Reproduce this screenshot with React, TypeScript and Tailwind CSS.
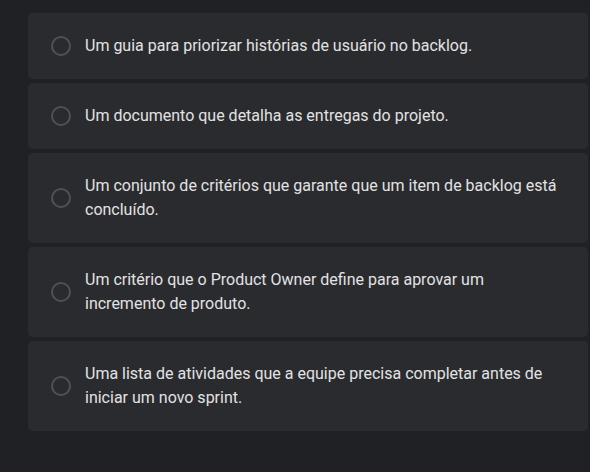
import React from 'react';

const options = [
  'Um guia para priorizar histórias de usuário no backlog.',
  'Um documento que detalha as entregas do projeto.',
  'Um conjunto de critérios que garante que um item de backlog está concluído.',
  'Um critério que o Product Owner define para aprovar um incremento de produto.',
  'Uma lista de atividades que a equipe precisa completar antes de iniciar um novo sprint.',
];

const App: React.FC = () => {
  return (
    <div className="min-h-[472px] w-[590px] bg-[#1f2125] pt-[13px] pl-[28px] pr-[2px] font-['Roboto',sans-serif]">
      <div className="flex flex-col gap-[4px]">
        {options.map(option => (
          <label
            key={option}
            className="flex items-center gap-[14px] rounded-[5px] bg-[#2a2b2f] py-[21px] pl-[23px] pr-[24px] cursor-pointer"
          >
            <span className="h-[20px] w-[20px] shrink-0 rounded-full border-2 border-[#505156]" />
            <span className="text-[16px] font-normal leading-[24px] text-[#e2e2e3]">{option}</span>
          </label>
        ))}
      </div>
    </div>
  );
};

export default App;
